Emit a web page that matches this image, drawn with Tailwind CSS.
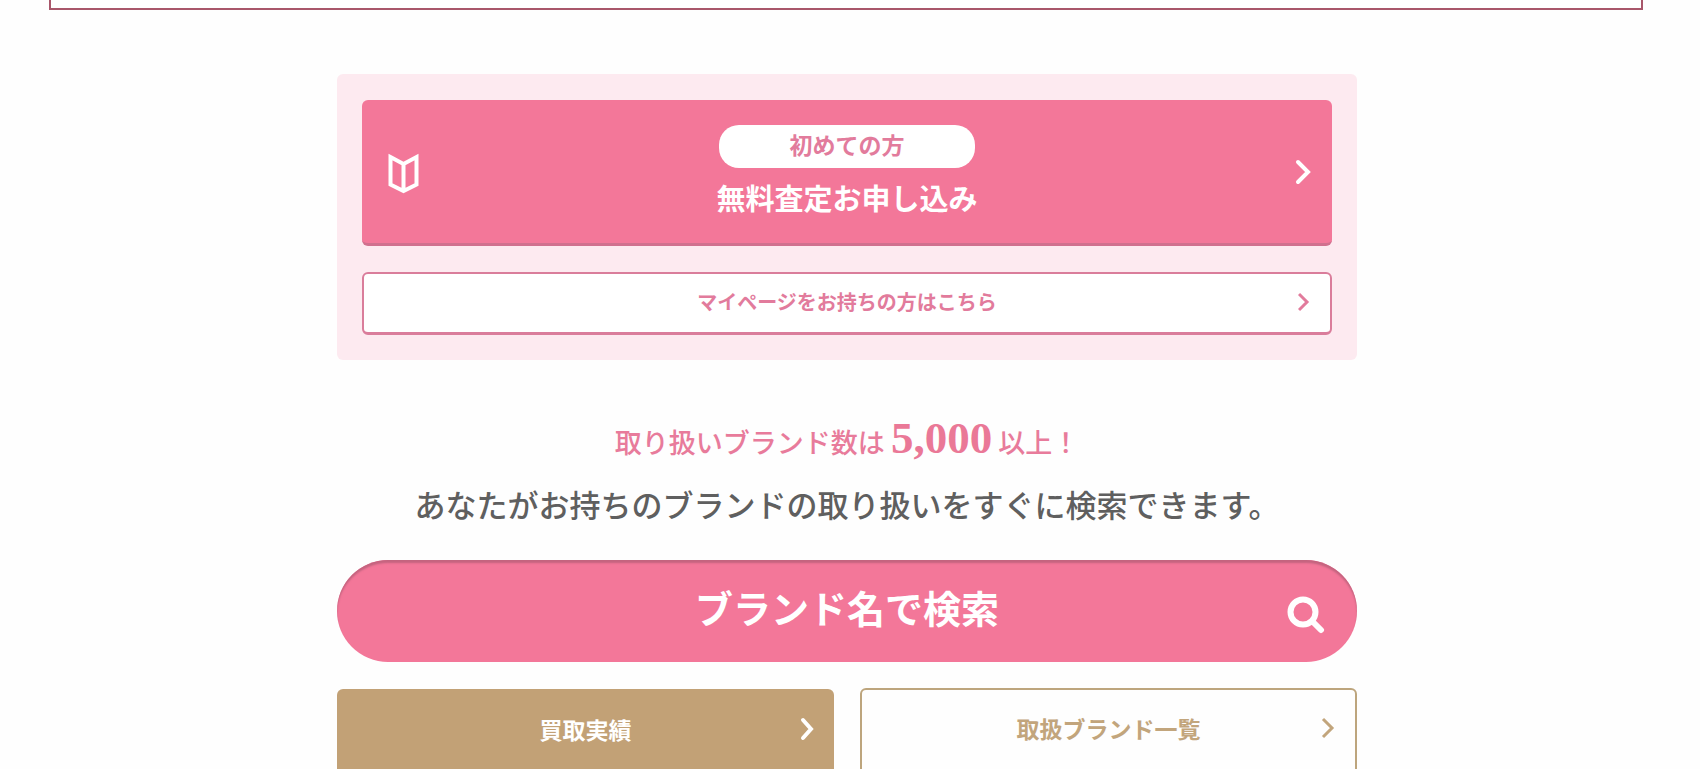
<!DOCTYPE html>
<html lang="ja">
<head>
<meta charset="utf-8">
<meta name="viewport" content="width=device-width, initial-scale=1">
<title>無料査定お申し込み</title>
<script src="https://cdn.jsdelivr.net/npm/@tailwindcss/browser@4"></script>
</head>
<body class="overflow-x-hidden bg-[#fefefe] pr-1.5 font-['Noto_Sans_CJK_JP',sans-serif] font-medium text-[#5f5f5f]">
<div class="mr-[51px] ml-[49px] h-2.5 border-x-2 border-b-2 border-[#a8566a]"></div>

<main class="mx-auto mt-16 max-w-[1020px]">
  <section class="flex flex-col gap-[26px] rounded-md bg-[#fdeaf0] px-[25px] pt-[26px] pb-[25px]">
    <a href="#apply" class="grid grid-cols-[1fr_auto_1fr] items-center rounded-md border-b-3 border-[#d0708e] bg-[#f37799] px-5 pt-[25px] pb-[26px] text-white">
      <svg class="mt-1 ml-1.5 h-[41px] w-[31px]" viewBox="0 0 31 41" fill="none" stroke="currentColor" stroke-width="4" aria-hidden="true"><path d="M2.5 4 15.500 11 28.500 4V31.500L15.500 38 2.500 31.500ZM15.500 11V38"/></svg>
      <span class="flex flex-col items-center gap-[9px]">
        <span class="flex h-[43px] w-64 items-center justify-center rounded-[20px] bg-white pb-1.5 text-[23px] leading-8 font-bold text-[#e27b9c]">初めての方</span>
        <span class="text-[29px] leading-10 font-bold">無料査定お申し込み</span>
      </span>
      <svg class="mt-0.5 h-7 w-[18px] justify-self-end" viewBox="0 0 18 28" fill="none" stroke="currentColor" stroke-width="4" stroke-linecap="round" aria-hidden="true"><path d="M4 4 14 14 4 24"/></svg>
    </a>
    <a href="#mypage" class="grid grid-cols-[1fr_auto_1fr] items-center rounded-md border-2 border-b-3 border-[#da7d9b] bg-white px-5 pt-3.5 pb-4 text-[#e27b9c]">
      <span></span>
      <span class="text-[20px] leading-[28px] font-bold">マイページをお持ちの方はこちら</span>
      <svg class="h-5 w-3 justify-self-end" viewBox="0 0 12 20" fill="none" stroke="currentColor" stroke-width="3" aria-hidden="true"><path d="M1 2 9 10 1 18"/></svg>
    </a>
  </section>

  <section class="mt-[53px] text-center">
    <p class="text-[27px] leading-[50px] text-[#e87b9b]">取り扱いブランド数は <strong class="font-['Liberation_Serif',serif] text-[45px] leading-[50px] font-bold text-[#ea7897]">5,000</strong> 以上！</p>
    <p class="mt-3.5 text-[31px] leading-[46px]">あなたがお持ちのブランドの取り扱いをすぐに検索できます。</p>
  </section>

  <button type="button" class="mt-[33px] grid w-full grid-cols-[1fr_auto_1fr] items-center rounded-full bg-[#f37799] px-8 pt-5 pb-7 text-white shadow-[inset_0_3px_2px_#c4647f]">
    <span></span>
    <span class="text-[38px] leading-[54px] font-bold">ブランド名で検索</span>
    <svg class="mt-4 h-[38px] w-[38px] justify-self-end" viewBox="0 0 38 38" fill="none" stroke="currentColor" stroke-width="6" stroke-linecap="round" aria-hidden="true"><circle cx="16" cy="16" r="12.500"/><path d="M26 26 34 34"/></svg>
  </button>

  <nav class="mt-[26px] grid grid-cols-2 gap-[26px]">
    <a href="#results" class="mt-px grid grid-cols-[1fr_auto_1fr] items-center rounded-md bg-[#c2a176] px-5 pt-5 pb-7 text-white">
      <span></span>
      <span class="text-[23px] leading-9 font-bold">買取実績</span>
      <svg class="h-6 w-3.5 justify-self-end" viewBox="0 0 14 24" fill="none" stroke="currentColor" stroke-width="4" stroke-linecap="round" aria-hidden="true"><path d="M3 3 11 12 3 21"/></svg>
    </a>
    <a href="#brands" class="grid grid-cols-[1fr_auto_1fr] items-center rounded-md border-2 border-[#bda57d] px-5 pt-5 pb-7 text-[#c2a57c]">
      <span></span>
      <span class="text-[23px] leading-9 font-bold">取扱ブランド一覧</span>
      <svg class="h-6 w-3.5 justify-self-end" viewBox="0 0 14 24" fill="none" stroke="currentColor" stroke-width="3" aria-hidden="true"><path d="M2 3 11 12 2 21"/></svg>
    </a>
  </nav>
</main>
</body>
</html>
